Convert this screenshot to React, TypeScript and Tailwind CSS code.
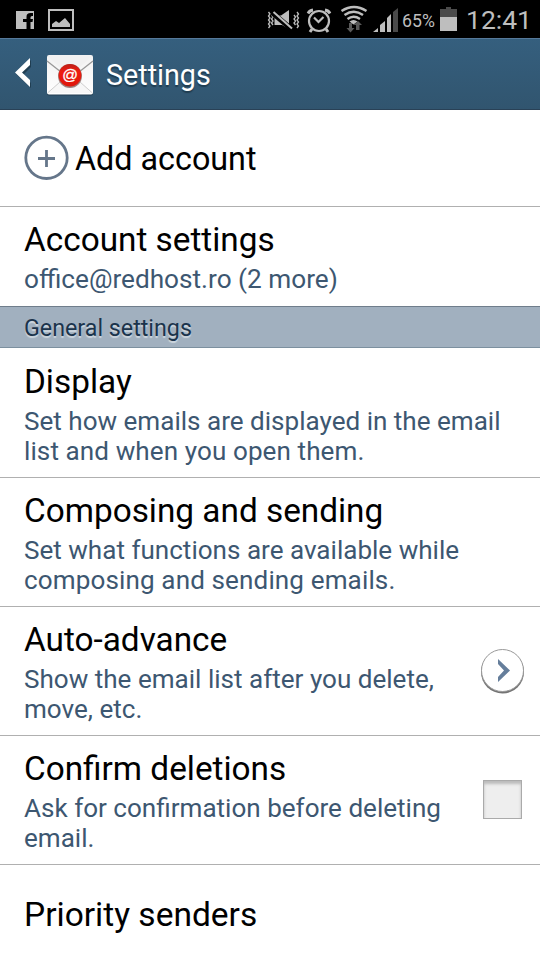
import type { ReactNode } from 'react';

function StatusBar() {
  return (
    <div className="flex h-[38px] shrink-0 bg-black">
      <svg width="400" height="38" viewBox="0 0 400 38" fill="#bebebe">
        <path d="M16 11h18v18h-3.500v-7h2l.5-3H30.500v-1.500q0-1.500 1.500-1.500h1v-3h-2.500q-4 0-4 3.700v2.300H23v3h3.500v7H16z" />
        <path d="M48 9h26v22H48zm2 2v18h22V11z" fillRule="evenodd" />
        <path d="M52 27v-3l4-3 3 2 6-5 5 6v3z" />
        <g fill="none" stroke="#bebebe" strokeWidth="1.300">
          <path d="M268.500 12l1.500 2-1.500 2 1.500 2-1.500 2 1.500 2-1.500 2 1.500 2-1.500 2M271.500 15l1.500 2-1.500 2 1.500 2-1.500 2 1.500 2M294 15l1.500 2-1.500 2 1.500 2-1.500 2 1.500 2M297 12l1.500 2-1.500 2 1.500 2-1.500 2 1.500 2-1.500 2 1.500 2-1.500 2" />
        </g>
        <path d="M274.500 15.500v9.500h7.500l7 4V10l-8 5.500z" />
        <path d="M272 12.500l20 17" stroke="#000" strokeWidth="5" />
        <path d="M273.500 12l18.500 16.500" stroke="#bebebe" strokeWidth="2" />
        <g fill="none" stroke="#bebebe" strokeWidth="2.200">
          <circle cx="319" cy="21" r="10" />
          <path d="M314 17.500l4.500 4.500 5-5" />
          <path d="M308 13.500q1.500-3 5-3.500M330 13.500q-1.500-3-5-3.500" strokeWidth="2.800" />
          <path d="M312 29l-2 3M326 29l2 3" strokeWidth="3" />
        </g>
        <g fill="none" stroke="#bebebe" strokeWidth="2.400">
          <path d="M341.500 11q12.500-8 25 0M344.500 15q9.500-6.500 18.500 0M347.500 19q6-4.500 12.500 0" />
        </g>
        <path d="M349.500 21.500q4-3 8 0l-4 3z" />
        <path d="M349 23h3v5h2.500l-4 4.500-4-4.500h2.500zM356 30v-5h-2.500l4.500-4 4 4h-2.500v5z" fill="#595959" />
        <path d="M373 32l5-4v4zM380 25l5-4v11h-5zM387 18l4-4v18h-4z" />
        <path d="M393 12l5-4v24h-5z" fill="#4a4a4a" />
      </svg>
      <span className="mt-[10px] ml-[2px] h-[22px] w-[36px] whitespace-nowrap text-[17.700px] leading-[22px] text-[#bebebe]">65%</span>
      <svg className="ml-[2px] shrink-0" width="18" height="38" viewBox="0 0 18 38">
        <path d="M0 9h6V7h5v2h6v8H0z" fill="#4b4b4b" />
        <path d="M0 17h17v14H0z" fill="#bebebe" />
      </svg>
      <span className="ml-[8px] whitespace-nowrap text-[26.500px] leading-[39px] text-[#bebebe]">12:41</span>
    </div>
  );
}

function MailIcon() {
  return (
    <svg className="mt-px ml-[14px]" width="48" height="42" viewBox="0 0 48 42">
      <defs>
        <linearGradient id="paper" x2="0" y2="1">
          <stop stopColor="#f2f2f2" />
          <stop offset="1" stopColor="#ffffff" />
        </linearGradient>
        <linearGradient id="seal" x2="0" y2="1">
          <stop stopColor="#bd2018" />
          <stop offset=".35" stopColor="#ef1c10" />
          <stop offset="1" stopColor="#dd160b" />
        </linearGradient>
      </defs>
      <rect x="1" y="2" width="46" height="39.500" rx="2" fill="#223d50" />
      <rect x="1" y="1" width="46" height="39.500" rx="2" fill="url(#paper)" />
      <path d="M2 2h44L25 21h-3z" fill="#f1f1f1" />
      <path d="M1.500 39L22 21h4l20.500 18" fill="#f7f7f7" stroke="#cfcfcf" />
      <path d="M1 7l19 15M47 7L28 22" stroke="#999" strokeWidth="1.300" />
      <circle cx="24" cy="22" r="12" fill="#9d817e" />
      <circle cx="24" cy="21.300" r="11.300" fill="url(#seal)" />
      <text x="24" y="26" textAnchor="middle" fontFamily="Liberation Sans, sans-serif" fontSize="15.500" stroke="#fff" strokeWidth=".3" fill="#fff">@</text>
    </svg>
  );
}

function Header() {
  return (
    <header className="flex h-[72px] shrink-0 items-center border-t border-b border-t-[#56799a] border-b-[#294156] bg-linear-to-b from-[#355f7e] to-[#31556f]">
      <svg className="mb-[2px] ml-[14px]" width="18" height="34" viewBox="0 0 18 34">
        <path d="M17 4v7l-8 8 8 8v5L2 18z" fill="#203e52" />
        <path d="M16 2v7l-8 7.500 8 7.500v7L1 16.500z" fill="#fff" />
      </svg>
      <MailIcon />
      <h1 className="mt-[2px] ml-[12px] text-[28.700px] leading-8 text-white [text-shadow:0_2px_1px_#203d51]">Settings</h1>
    </header>
  );
}

function Item({ title, children, control, height = 'h-[129px]', subtitleSize = 'text-[26.070px]' }: { title: string; children: ReactNode; control?: ReactNode; height?: string; subtitleSize?: string }) {
  return (
    <section className={`flex shrink-0 items-center justify-between border-b border-[#b0b0b0] pl-6 ${height}`}>
      <div className="h-full pt-[13px]">
        <h2 className="text-[33.350px] leading-[40px] text-black">{title}</h2>
        <p className={`whitespace-nowrap pt-[4px] leading-[30px] text-[#3d5771] ${subtitleSize}`}>{children}</p>
      </div>
      {control}
    </section>
  );
}

export default function App() {
  return (
    <main className="flex h-[960px] w-[540px] flex-col overflow-hidden bg-white font-[Roboto,sans-serif]">
      <StatusBar />
      <Header />
      <section className="flex h-[97px] shrink-0 items-center border-b border-[#b0b0b0] pl-6">
        <svg width="46" height="46" viewBox="0 0 46 46" fill="none" stroke="#65768a">
          <circle cx="22.500" cy="22.800" r="20.700" strokeWidth="2.800" />
          <path d="M14 23.500h17M22.500 15v17" strokeWidth="2.800" />
        </svg>
        <h2 className="mt-[2px] ml-[5px] text-[32.300px] leading-[40px] text-black">Add account</h2>
      </section>
      <Item title="Account settings" height="h-[99px] border-b-0" subtitleSize="text-[26.200px]">office@redhost.ro (2 more)</Item>
      <div className="flex h-[42px] shrink-0 items-center border-t border-b border-t-[#6f7d8b] border-b-[#7c909f] bg-[#a1b0bf] pt-[3px] pl-6 text-[23.250px] text-[#1b344c] [text-shadow:0_2px_1px_#ced7df]">General settings</div>
      <Item title="Display" height="h-[130px] pt-px">Set how emails are displayed in the email<br /><span className="tracking-[0.090px]">list and when you open them.</span></Item>
      <Item title="Composing and sending">Set what functions are available while<br /><span className="tracking-[0.120px]">composing and sending emails.</span></Item>
      <Item
        title="Auto-advance"
        control={
          <svg className="mt-px mr-[15px]" width="44" height="46" viewBox="0 0 44 46">
            <circle cx="21.500" cy="23" r="21.500" fill="#747474" />
            <circle cx="21.500" cy="21.500" r="21" fill="#fff" stroke="#999" />
            <path d="M17 10v5l6 6.500-6 6.500v5l12-11.500z" fill="#657e9b" />
          </svg>
        }
      >
        Show the email list after you delete,<br />move, etc.
      </Item>
      <Item
        title="Confirm deletions"
        control={<div className="mr-[18px] mb-[2px] size-[39px] border border-[#aaa] bg-[#eee] [box-shadow:inset_0_3px_3px_#bbb]" />}
      >
        Ask for confirmation before deleting<br />email.
      </Item>
      <section className="flex h-[95px] shrink-0 items-center pt-1 pl-6">
        <h2 className="text-[33.500px] leading-[40px] text-black">Priority senders</h2>
      </section>
    </main>
  );
}
